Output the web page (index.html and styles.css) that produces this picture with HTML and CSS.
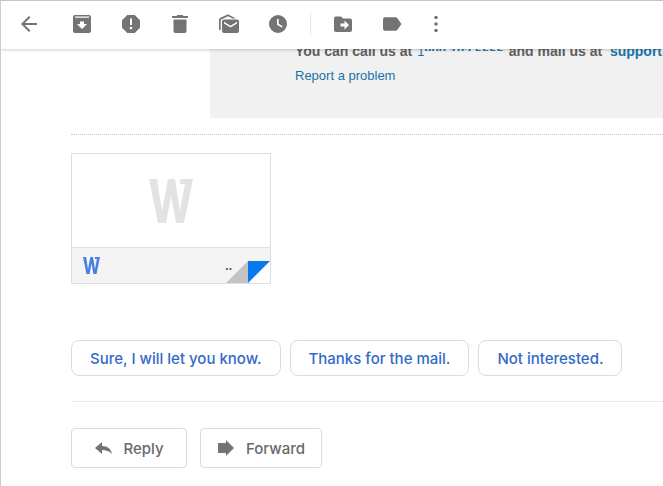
FILE: index.html
```html
<!DOCTYPE html>
<html lang="en">
<head>
    <meta charset="UTF-8">
    <meta name="viewport" content="width=device-width, initial-scale=1.0">
    <title>Mail</title>
    <link rel="stylesheet" href="styles.css">
</head>
<body>
    <header class="toolbar">
        <button class="icon-button back" aria-label="Back">
            <svg viewBox="0 0 24 24"><path d="M20 11H7.83l5.59-5.59L12 4l-8 8 8 8 1.41-1.41L7.83 13H20z"/></svg>
        </button>
        <button class="icon-button" aria-label="Archive">
            <svg viewBox="0 0 24 24"><path fill-rule="evenodd" d="M5 3h14a2 2 0 0 1 2 2v14a2 2 0 0 1-2 2H5a2 2 0 0 1-2-2V5a2 2 0 0 1 2-2zM5 4.500v1.300h14V4.500zM12 17l5-5h-3v-2.500h-4V12H7z"/></svg>
        </button>
        <button class="icon-button" aria-label="Report spam">
            <svg viewBox="0 0 24 24"><path d="M15.730 3H8.270L3 8.270v7.460L8.270 21h7.460L21 15.730V8.270zM12 17.300a1.300 1.300 0 1 1 0-2.600 1.300 1.300 0 0 1 0 2.600zM13 13h-2V6.500h2z"/></svg>
        </button>
        <button class="icon-button" aria-label="Delete">
            <svg viewBox="0 0 24 24"><path d="M5.500 7.500V19a2 2 0 0 0 2 2h9a2 2 0 0 0 2-2V7.500zM20 4h-4.500l-1-1h-5l-1 1H4v2h16z"/></svg>
        </button>
        <button class="icon-button" aria-label="Mark as unread">
            <svg viewBox="0 0 24 24"><path d="M18.800 6.500L11 2.200 3 6Q2 6.500 2 7.500V18h1.700V7.700L11 4.200l4.500 2.300z"/><path fill-rule="evenodd" d="M7 7.500h13a2 2 0 0 1 2 2V19a2 2 0 0 1-2 2H7a2 2 0 0 1-2-2V9.500a2 2 0 0 1 2-2zM7 9.800v1.700l6.500 4 6.500-4V9.800l-6.500 4z"/></svg>
        </button>
        <button class="icon-button" aria-label="Snooze">
            <svg viewBox="0 0 24 24"><path fill-rule="evenodd" d="M12 3a9 9 0 1 0 0 18 9 9 0 0 0 0-18zM11 7h1.700v4.800l4 2.400-.9 1.400L11 12.700z"/></svg>
        </button>
        <span class="toolbar-divider"></span>
        <button class="icon-button" aria-label="Move to">
            <svg viewBox="0 0 24 24"><path fill-rule="evenodd" d="M5 4.500h5l2 2h7a2 2 0 0 1 2 2V18a2 2 0 0 1-2 2H5a2 2 0 0 1-2-2V6.500a2 2 0 0 1 2-2zM13.500 17.500l4.500-4.500-4.500-4.500v3H9.500v3h4z"/></svg>
        </button>
        <button class="icon-button" aria-label="Labels">
            <svg viewBox="0 0 24 24"><path d="M17.200 6a2 2 0 0 0-1.600-.8H5a2 2 0 0 0-2 2v9.600a2 2 0 0 0 2 2h10.600a2 2 0 0 0 1.600-.8l4.300-6z"/></svg>
        </button>
        <button class="icon-button more" aria-label="More">
            <svg viewBox="0 0 24 24"><circle cx="12" cy="5.500" r="1.800"/><circle cx="12" cy="12" r="1.800"/><circle cx="12" cy="18.500" r="1.800"/></svg>
        </button>
    </header>

    <main class="message">
        <div class="mail-footer">
            <p class="contact">You can call us at <a href="#" class="phone">1<span class="masked">800 102 5555</span></a> and mail us at &nbsp;<a href="#">support@</a></p>
            <a href="#" class="report">Report a problem</a>
        </div>

        <section class="attachments">
            <a href="#" class="attachment" aria-label="Word document">
                <span class="preview">
                    <svg class="word-large" viewBox="0 0 44 44"><path d="M0 0h8l5 32L19 0h7l5 32 5-27h-5V0h13l-9 44h-8l-5-27-5 27H9z"/></svg>
                </span>
                <span class="file-bar">
                    <svg class="word-small" viewBox="0 0 44 44"><path d="M0 0h8l5 32L19 0h7l5 32 5-27h-5V0h13l-9 44h-8l-5-27-5 27H9z"/></svg>
                    <span class="dots">..</span>
                    <svg class="fold" viewBox="0 0 44 22"><path fill="#c4c4c4" d="M0 22L22 0v22z"/><path fill="#fff" d="M22 22L44 0v22z"/><path fill="#0878ee" d="M22 0h22L22 22z"/></svg>
                </span>
            </a>
        </section>

        <div class="smart-replies">
            <button class="chip">Sure, I will let you know.</button>
            <button class="chip">Thanks for the mail.</button>
            <button class="chip">Not interested.</button>
        </div>

        <div class="actions">
            <button class="action">
                <svg viewBox="0 0 20 20"><path d="M8 4v4c6 0 9 3 10 8-3-3-6-4-10-4v4L1 10z"/></svg>
                Reply
            </button>
            <button class="action">
                <svg viewBox="0 0 20 20"><path d="M1 5h8V2l8 8-8 8v-3H1z"/></svg>
                Forward
            </button>
        </div>
    </main>
</body>
</html>
```

FILE: styles.css
```css
* {
    box-sizing: border-box;
}
body {
    margin: 0;
    min-height: 100vh;
    background-color: #fff;
    border-top: 1px solid #c9c2c4;
    border-left: 1px solid #d5c8cc;
    font-family: Arial, "Liberation Sans", sans-serif;
    overflow-x: hidden;
}
button {
    font-family: Inter, sans-serif;
    cursor: pointer;
}
a {
    color: #1a73a8;
    text-decoration: none;
}
.toolbar {
    position: relative;
    z-index: 1;
    display: flex;
    align-items: center;
    gap: 25px;
    height: 48px;
    padding: 0 0 2px 16px;
    background-color: #fff;
    box-shadow: 0 1px 3px rgba(0, 0, 0, 0.2);
}
.icon-button {
    flex: none;
    width: 24px;
    height: 24px;
    padding: 0;
    border: none;
    background: none;
}
.icon-button svg {
    display: block;
    width: 24px;
    height: 24px;
    fill: #747474;
}
.back {
    margin-right: 4px;
}
.toolbar-divider {
    width: 1px;
    height: 22px;
    margin: 0 -5px;
    background-color: #e6e6e6;
}
.more {
    margin-left: -5px;
}
.message {
    padding-left: 70px;
}
.mail-footer {
    height: 77px;
    margin: -8px 0 0 139px;
    padding-left: 85px;
    background-color: #f1f1f1;
    font-size: 13px;
    line-height: 20px;
}
.contact {
    margin: 0 0 4px;
    color: #5f5f5f;
    font-size: 14px;
    font-weight: bold;
    white-space: nowrap;
}
.phone {
    margin: 0 1px;
    font-size: 13px;
    font-weight: normal;
}
/* the number is only partly shown */
.masked {
    position: relative;
    font-weight: bold;
}
.masked::after {
    content: "";
    position: absolute;
    right: 0;
    bottom: 0;
    left: 0;
    height: 8px;
    background-color: #f1f1f1;
}
.attachments {
    margin-top: 16px;
    padding-top: 18px;
    border-top: 1px dotted #c4c4c4;
}
.attachment {
    display: block;
    width: 200px;
    border: 1px solid #dedede;
}
.preview {
    display: flex;
    align-items: center;
    justify-content: center;
    height: 93px;
}
.word-large {
    width: 44px;
    height: 44px;
    fill: #e3e3e3;
}
.file-bar {
    display: flex;
    align-items: center;
    height: 36px;
    padding-left: 11px;
    border-top: 1px solid #dedede;
    background-color: #f4f4f4;
}
.word-small {
    width: 17px;
    height: 17px;
    fill: #4a80e4;
}
.dots {
    margin: 0 -6px 0 auto;
    color: #555;
    font-size: 12px;
    font-weight: bold;
}
.fold {
    align-self: flex-end;
    width: 44px;
    height: 22px;
}
.smart-replies {
    display: flex;
    gap: 9px;
    margin-top: 56px;
    padding-bottom: 25px;
    border-bottom: 1px solid #ebebeb;
}
.chip {
    height: 36px;
    padding: 0 18px;
    border: 1px solid #dadce0;
    border-radius: 8px;
    background-color: #fff;
    color: #3369c8;
    font-size: 15px;
    font-weight: 500;
    white-space: nowrap;
}
.actions {
    display: flex;
    gap: 13px;
    margin-top: 26px;
}
.action {
    display: flex;
    align-items: center;
    justify-content: center;
    gap: 9px;
    min-width: 116px;
    height: 40px;
    padding: 0 16px;
    border: 1px solid #dadce0;
    border-radius: 4px;
    background-color: #fff;
    color: #66696d;
    font-size: 15px;
    font-weight: 500;
}
.action svg {
    width: 20px;
    height: 20px;
    fill: #747474;
}
```
